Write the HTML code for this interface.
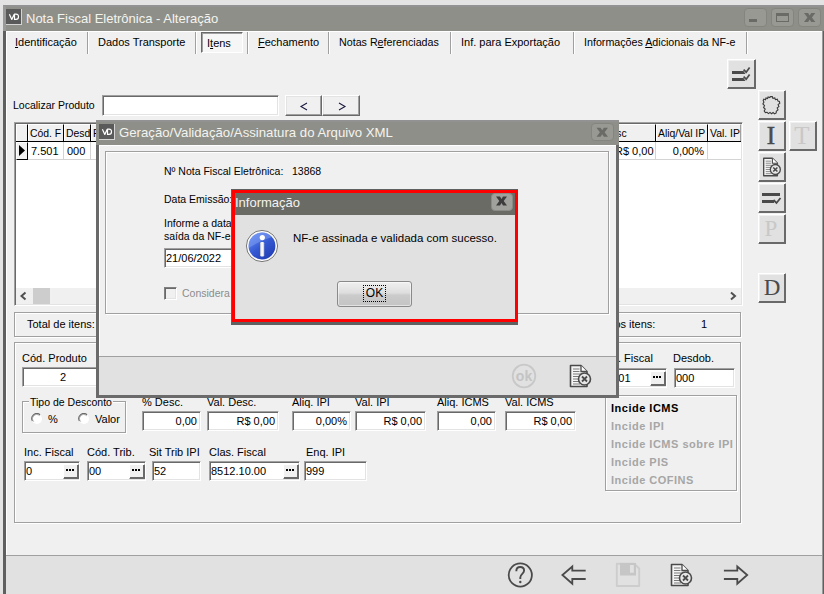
<!DOCTYPE html>
<html><head><meta charset="utf-8">
<style>
*{margin:0;padding:0;box-sizing:border-box}
html,body{width:824px;height:594px;overflow:hidden;background:#e3e3e3;font-family:"Liberation Sans",sans-serif;font-size:11px;color:#000}
.a{position:absolute}
.t{position:absolute;white-space:nowrap;line-height:13px}
.vd{position:absolute;width:16px;height:16px;background:#5a5a5a;border-right:1px solid #d4d4d4;border-bottom:1px solid #d4d4d4;color:#fff;font:bold 8px "Liberation Sans",sans-serif;line-height:15px;text-align:center;letter-spacing:-1px}
.ed{position:absolute;background:#fff;border:1px solid;border-color:#a0a0a0 #fff #fff #a0a0a0;box-shadow:inset 1px 1px 0 #696969,inset -1px -1px 0 #e3e3e3;overflow:hidden;white-space:nowrap;line-height:13px;padding:3px 3px 0 1px}
.ed.r{text-align:right}
.ed.c{text-align:center}
.btn{position:absolute;background:#f0f0f0;border:1px solid;border-color:#fff #696969 #696969 #fff;box-shadow:inset -1px -1px 0 #a0a0a0,inset 1px 1px 0 #e3e3e3}
.tb{position:absolute;background:#e1e1e1;border:1px solid;border-color:#fff #696969 #696969 #fff;box-shadow:inset -1px -1px 0 #696969,inset 1px 1px 0 #f0f0f0}
.etch{position:absolute;border:1px solid #a0a0a0;box-shadow:1px 1px 0 #fff,inset 1px 1px 0 #fff}
.tbtn{position:absolute;border-radius:4px;background:#999994;border:1px solid #85857f}
.sep{position:absolute;width:2px;top:32px;height:22px;border-left:1px solid #a0a0a0;border-right:1px solid #fff}
.ell{position:absolute;width:16px;height:15px;background:#f0f0f0;border:1px solid;border-color:#fff #696969 #696969 #fff;box-shadow:inset -1px -1px 0 #696969}
.ell:after{content:"";position:absolute;left:2px;top:4px;width:2px;height:2px;background:#000;box-shadow:3px 0 0 #000,6px 0 0 #000}
.hd{position:absolute;top:124px;height:17px;font-size:10.4px;background:#f0f0f0;border-top:1px solid #fff;border-left:1px solid #fff;border-right:1px solid #000;overflow:hidden;white-space:nowrap;line-height:13px;padding:2px 0 0 1px}
.cell{position:absolute;top:142px;height:18px;border-right:1px solid #d4d4d4;border-bottom:1px solid #d4d4d4;overflow:hidden;white-space:nowrap;line-height:13px;padding:3px 3px 0 3px;background:#fff}
.inc{position:absolute;left:611px;font:bold 11px "Liberation Sans",sans-serif;letter-spacing:0.5px;line-height:14px;color:#a6a6a6;white-space:nowrap}
</style></head><body>
<!-- ============ MAIN WINDOW ============ -->
<div class="a" style="left:3px;top:5px;width:821px;height:589px;background:#5f5f5f"></div>
<div class="a" style="left:3px;top:5px;width:821px;height:26px;background:#8f8f89;border-top:2px solid #929292;border-left:3px solid #999"></div>
<div class="vd" style="left:6px;top:9px"><svg width="15" height="15" style="position:absolute;left:0;top:0"><path d="M3.4 5.2 L5.8 10.4 L8.2 5.2 M8.5 5.2 V10.4 H10 C11.9 10.4 12.5 9.2 12.5 7.8 C12.5 6.4 11.9 5.2 10 5.2 Z" fill="none" stroke="#fff" stroke-width="1.2" stroke-linejoin="round"/></svg></div>
<div class="t" style="left:26px;top:11px;font-size:13px;line-height:15px;color:#f4f4ee">Nota Fiscal Eletrônica - Alteração</div>
<div class="tbtn" style="left:744px;top:8px;width:23px;height:19px"></div>
<div class="a" style="left:749px;top:19px;width:8px;height:3px;background:#6a6a66"></div>
<div class="tbtn" style="left:771px;top:8px;width:23px;height:19px"></div>
<div class="a" style="left:776px;top:13px;width:13px;height:9px;border:1px solid #6a6a66;border-top:3px solid #6a6a66"></div>
<div class="tbtn" style="left:798px;top:8px;width:23px;height:19px"></div>
<svg class="a" style="left:798px;top:8px" width="23" height="19"><path d="M6.0 5.0 L10.1 5.0 L11.7 7.5 L13.2 5.0 L17.3 5.0 L13.9 9.5 L17.3 14.0 L13.2 14.0 L11.7 11.5 L10.1 14.0 L6.0 14.0 L9.4 9.5 Z" fill="#6a6a66"/></svg>

<!-- client -->
<div class="a" style="left:6px;top:31px;width:816px;height:563px;background:#f0f0f0;border-top:1px solid #fff;border-left:1px solid #fff"></div>
<div class="a" style="left:6px;top:555px;width:816px;height:39px;background:#e1e1e1;border-top:1px solid #a0a0a0"></div>
<div class="a" style="left:822px;top:31px;width:1px;height:563px;background:#9a9a9a"></div>

<!-- tabs -->
<div class="t" style="left:15px;top:36px"><u>I</u>dentificação</div>
<div class="sep" style="left:87px"></div>
<div class="t" style="left:98px;top:36px">Dados Transporte</div>
<div class="sep" style="left:195px"></div>
<div class="a" style="left:201px;top:32px;width:42px;height:21px;border:1px solid;border-color:#696969 #fff #fff #696969;box-shadow:inset 1px 1px 0 #a0a0a0;background:#f6f6f6"></div>
<div class="t" style="left:207px;top:37px"><span>I</span><u>t</u>ens</div>
<div class="sep" style="left:247px"></div>
<div class="t" style="left:258px;top:36px"><u>F</u>echamento</div>
<div class="sep" style="left:328px"></div>
<div class="t" style="left:339px;top:36px;font-size:10.7px">Notas R<u>e</u>ferenciadas</div>
<div class="sep" style="left:450px"></div>
<div class="t" style="left:461px;top:36px">Inf. para Exportação</div>
<div class="sep" style="left:573px"></div>
<div class="t" style="left:584px;top:36px;font-size:10.7px">Informações <u>A</u>dicionais da NF-e</div>
<div class="sep" style="left:746px"></div>

<!-- right toolbar -->
<div class="tb" style="left:727px;top:59px;width:29px;height:30px"></div>
<svg class="a" style="left:727px;top:59px" width="29" height="30"><g fill="#4a4a4a"><path d="M5 12h11.5l2 3H5z"/><path d="M5 19h11.5l2 3H5z"/></g><g fill="none" stroke="#4a4a4a" stroke-width="1.7"><path d="M16.6 10.6l2.6 2.6 3.4-4.6"/><path d="M16.6 17.6l2.6 2.6 3.4-4.6"/></g></svg>
<div class="tb" style="left:758px;top:90px;width:28px;height:30px"></div>
<svg class="a" style="left:758px;top:90px" width="28" height="30"><path d="M12.6 6.6 L14.3 6.5 L14.9 8.3 L16.8 7.9 L17.4 9.7 L19.3 9.2 L20.0 11.1 L21.4 11.4 L21.8 13.3 L20.1 14.6 L20.9 16.6 L19.2 17.9 L20.0 19.9 L18.3 21.2 L18.2 23.0 L16.6 23.8 L15.1 22.5 L13.5 23.7 L12.0 22.4 L10.5 23.6 L9.0 22.3 L7.4 22.6 L6.2 21.0 L7.2 19.0 L5.6 17.5 L6.5 15.6 L4.9 14.0 L5.9 12.1 L5.2 10.4 L5.8 9.1 L7.5 9.7 L8.0 8.0 L9.6 8.6 L10.1 6.9 L11.7 7.5 Z" fill="none" stroke="#3a3a3a" stroke-width="1.1" stroke-linejoin="miter" stroke-miterlimit="10"/></svg>
<div class="tb" style="left:758px;top:121px;width:28px;height:30px"></div>
<div class="t" style="left:757px;top:122px;width:28px;text-align:center;font:25px/28px 'Liberation Serif',serif;color:#4a4a4a;-webkit-text-stroke:0.5px #4a4a4a">I</div>
<div class="tb" style="left:789px;top:121px;width:28px;height:30px"></div>
<div class="t" style="left:788px;top:122px;width:28px;text-align:center;font:25px/28px 'Liberation Serif',serif;color:#c8c8c8">T</div>
<div class="tb" style="left:758px;top:152px;width:28px;height:30px"></div>
<svg class="a" style="left:762px;top:157px" width="20" height="20" viewBox="0 0 23 24"><use href="#docx"/></svg>
<div class="tb" style="left:758px;top:183px;width:28px;height:30px"></div>
<svg class="a" style="left:758px;top:183px" width="28" height="30"><g fill="#4a4a4a"><rect x="4" y="10" width="18" height="3"/><rect x="4" y="17" width="12" height="3"/></g><path d="M15.5 17l3 3 4-5" fill="none" stroke="#4a4a4a" stroke-width="1.8"/></svg>
<div class="tb" style="left:758px;top:214px;width:28px;height:30px"></div>
<div class="t" style="left:757px;top:215px;width:28px;text-align:center;font:23px/28px 'Liberation Serif',serif;color:#c8c8c8">P</div>
<div class="tb" style="left:758px;top:273px;width:28px;height:30px"></div>
<div class="t" style="left:758px;top:274px;width:28px;text-align:center;font:23px/28px 'Liberation Serif',serif;color:#4a4a4a">D</div>

<!-- localizar -->
<div class="t" style="left:13px;top:99px;font-size:10.5px">Localizar Produto</div>
<div class="ed" style="left:102px;top:95px;width:177px;height:21px"></div>
<div class="btn" style="left:285px;top:95px;width:37px;height:21px"></div>
<div class="btn" style="left:322px;top:95px;width:38px;height:21px"></div>
<svg class="a" style="left:285px;top:95px" width="75" height="21"><path d="M22 8 L16 11.5 L22 15 M54 8 L60 11.5 L54 15" fill="none" stroke="#1a1a40" stroke-width="1.1"/></svg>


<!-- grid -->
<div class="a" style="left:14px;top:122px;width:729px;height:184px;background:#fff;border:1px solid;border-color:#a0a0a0 #fff #fff #a0a0a0;box-shadow:inset 1px 1px 0 #696969,inset -1px -1px 0 #e3e3e3"></div>
<div class="hd" style="left:16px;width:12px"></div>
<div class="hd" style="left:28px;width:36px">Cód. F</div>
<div class="hd" style="left:64px;width:27px">Desd</div>
<div class="hd" style="left:91px;width:40px">P</div>
<div class="hd" style="left:612px;width:44px;padding-left:2px;text-indent:-12px">Desc</div>
<div class="hd" style="left:656px;width:52px">Aliq/Val IP</div>
<div class="hd" style="left:708px;width:33px;border-right:1px solid #a0a0a0">Val. IP</div>
<div class="a" style="left:16px;top:141px;width:725px;height:1px;background:#000"></div>
<div class="a" style="left:16px;top:142px;width:12px;height:18px;background:#f0f0f0;border-top:1px solid #fff;border-left:1px solid #fff;border-right:1px solid #000;border-bottom:1px solid #000"></div>
<svg class="a" style="left:18px;top:145px" width="8" height="12"><path d="M1 0 L7 5.5 L1 11 Z" fill="#000"/></svg>
<div class="cell" style="left:28px;width:36px">7.501</div>
<div class="cell" style="left:64px;width:27px">000</div>
<div class="cell" style="left:91px;width:40px"></div>
<div class="cell" style="left:612px;width:44px;text-align:right;padding-right:7px">R$ 0,00</div>
<div class="cell" style="left:656px;width:52px;text-align:right">0,00%</div>
<div class="cell" style="left:708px;width:33px;border-right:none"></div>
<!-- scrollbar -->
<div class="a" style="left:16px;top:288px;width:725px;height:16px;background:#f0f0f0"></div>
<svg class="a" style="left:19px;top:291px" width="10" height="10"><path d="M6.5 1.5 L2.5 5 L6.5 8.5" fill="none" stroke="#505050" stroke-width="2"/></svg>
<div class="a" style="left:33px;top:288px;width:17px;height:16px;background:#cdcdcd"></div>
<svg class="a" style="left:728px;top:291px" width="10" height="10"><path d="M3 1.5 L7 5 L3 8.5" fill="none" stroke="#505050" stroke-width="2"/></svg>

<!-- totals -->
<div class="etch" style="left:14px;top:312px;width:727px;height:25px"></div>
<div class="t" style="left:27px;top:318px">Total de itens:</div>
<div class="t" style="left:582px;top:318px">Total dos itens:</div>
<div class="t" style="left:701px;top:318px">1</div>

<!-- main panel -->
<div class="etch" style="left:14px;top:342px;width:727px;height:181px"></div>
<div class="t" style="left:22px;top:352px">Cód. Produto</div>
<div class="ed c" style="left:22px;top:367px;width:84px;height:20px">2</div>
<div class="t" style="left:596px;top:352px">Clas. Fiscal</div>
<div class="ed" style="left:595px;top:368px;width:72px;height:20px;padding-left:7px">5.101</div>
<div class="ell" style="left:650px;top:371px"></div>
<div class="t" style="left:673px;top:352px">Desdob.</div>
<div class="ed" style="left:674px;top:368px;width:61px;height:20px">000</div>

<div class="etch" style="left:22px;top:401px;width:104px;height:32px;box-shadow:1px 1px 0 #fff,inset 1px 1px 0 #fff"></div>
<div class="t" style="left:29px;top:396px;background:#f0f0f0;padding:0 1px;font-size:10.5px">Tipo de Desconto</div>
<svg class="a" style="left:31px;top:413px" width="12" height="12"><circle cx="6" cy="6" r="5" fill="#fff"/><path d="M1.5 8 A5 5 0 0 1 9 1.7" fill="none" stroke="#6a6a6a" stroke-width="1.3"/><path d="M2.7 8.6 A4 4 0 0 1 8.6 2.7" fill="none" stroke="#a8a8a8" stroke-width="1"/></svg>
<div class="t" style="left:48px;top:413px">%</div>
<svg class="a" style="left:78px;top:413px" width="12" height="12"><circle cx="6" cy="6" r="5" fill="#fff"/><path d="M1.5 8 A5 5 0 0 1 9 1.7" fill="none" stroke="#6a6a6a" stroke-width="1.3"/><path d="M2.7 8.6 A4 4 0 0 1 8.6 2.7" fill="none" stroke="#a8a8a8" stroke-width="1"/></svg>
<div class="t" style="left:95px;top:413px">Valor</div>

<div class="t" style="left:142px;top:396px">% Desc.</div>
<div class="ed r" style="left:142px;top:411px;width:59px;height:20px">0,00</div>
<div class="t" style="left:207px;top:396px">Val. Desc.</div>
<div class="ed r" style="left:207px;top:411px;width:72px;height:20px">R$ 0,00</div>
<div class="t" style="left:292px;top:396px">Aliq. IPI</div>
<div class="ed r" style="left:292px;top:411px;width:59px;height:20px">0,00%</div>
<div class="t" style="left:355px;top:396px">Val. IPI</div>
<div class="ed r" style="left:355px;top:411px;width:71px;height:20px">R$ 0,00</div>
<div class="t" style="left:437px;top:396px">Aliq. ICMS</div>
<div class="ed r" style="left:437px;top:411px;width:59px;height:20px">0,00</div>
<div class="t" style="left:505px;top:396px">Val. ICMS</div>
<div class="ed r" style="left:505px;top:411px;width:71px;height:20px">R$ 0,00</div>

<div class="t" style="left:24px;top:446px">Inc. Fiscal</div>
<div class="ed" style="left:24px;top:461px;width:56px;height:20px">0</div>
<div class="ell" style="left:63px;top:464px"></div>
<div class="t" style="left:87px;top:446px">Cód. Trib.</div>
<div class="ed" style="left:87px;top:461px;width:59px;height:20px">00</div>
<div class="ell" style="left:129px;top:464px"></div>
<div class="t" style="left:149px;top:446px">Sit Trib IPI</div>
<div class="ed" style="left:152px;top:461px;width:49px;height:20px">52</div>
<div class="t" style="left:209px;top:446px">Clas. Fiscal</div>
<div class="ed" style="left:209px;top:461px;width:91px;height:20px">8512.10.00</div>
<div class="ell" style="left:283px;top:464px"></div>
<div class="t" style="left:306px;top:446px">Enq. IPI</div>
<div class="ed" style="left:304px;top:461px;width:63px;height:20px">999</div>

<div class="etch" style="left:605px;top:395px;width:132px;height:96px"></div>
<div class="inc" style="top:401px;color:#000">Incide ICMS</div>
<div class="inc" style="top:419px">Incide IPI</div>
<div class="inc" style="top:437px">Incide ICMS sobre IPI</div>
<div class="inc" style="top:455px">Incide PIS</div>
<div class="inc" style="top:473px">Incide COFINS</div>

<!-- bottom toolbar -->
<svg class="a" style="left:500px;top:556px" width="260" height="38">
 <circle cx="20.3" cy="19" r="11.6" fill="none" stroke="#4a4a4a" stroke-width="1.8"/>
 <path d="M16.3 15.2 C16.3 12.3 18.2 11 20.2 11 C22.4 11 24.1 12.5 24.1 14.6 C24.1 17.8 20.3 18 20.3 21.5 L20.3 23" fill="none" stroke="#4a4a4a" stroke-width="1.9"/>
 <circle cx="20.3" cy="26" r="1.2" fill="#4a4a4a"/>
 <path d="M85.7 14.6 H72.3 V10.5 L62.4 19 L72.3 27.7 V23 H85.7" fill="none" stroke="#4a4a4a" stroke-width="1.8" stroke-linejoin="miter"/>
 <path d="M116.8 7.8 H134.5 L139.2 12.5 V30 H116.8 Z" fill="none" stroke="#cdcdcd" stroke-width="1.9" stroke-linejoin="round"/>
 <rect x="120" y="7" width="16" height="12.5" fill="#c6c6c6"/>
 <rect x="130" y="9" width="3.8" height="7.7" fill="#e1e1e1"/>
 <path d="M223.9 14.6 H237.3 V10.5 L247.2 19 L237.3 27.7 V23 H223.9" fill="none" stroke="#4a4a4a" stroke-width="1.8" stroke-linejoin="miter"/>
</svg>
<svg class="a" style="left:670px;top:562px" width="23" height="26" viewBox="0 0 23 24"><use href="#docx"/></svg>

<!-- ============ GERACAO DIALOG ============ -->
<div class="a" style="left:96px;top:120px;width:523px;height:278px;background:#6a6a6a"></div>
<div class="a" style="left:96px;top:120px;width:523px;height:25px;background:#8f8f89;border-top:2px solid #929292"></div>
<div class="vd" style="left:99px;top:124px"><svg width="15" height="15" style="position:absolute;left:0;top:0"><path d="M3.4 5.2 L5.8 10.4 L8.2 5.2 M8.5 5.2 V10.4 H10 C11.9 10.4 12.5 9.2 12.5 7.8 C12.5 6.4 11.9 5.2 10 5.2 Z" fill="none" stroke="#fff" stroke-width="1.2" stroke-linejoin="round"/></svg></div>
<div class="t" style="left:119px;top:125px;font-size:13.2px;line-height:15px;color:#f4f4ee">Geração/Validação/Assinatura do Arquivo XML</div>
<div class="tbtn" style="left:591px;top:123px;width:23px;height:18px"></div>
<svg class="a" style="left:591px;top:123px" width="23" height="18"><path d="M5.5 4.7 L9.6 4.7 L11.2 7.2 L12.9 4.7 L17.0 4.7 L13.6 9.2 L17.0 13.7 L12.9 13.7 L11.2 11.2 L9.6 13.7 L5.5 13.7 L8.9 9.2 Z" fill="#6a6a66"/></svg>
<div class="a" style="left:99px;top:145px;width:517px;height:250px;background:#f0f0f0;border-left:1px solid #fff;border-top:1px solid #fff"></div>
<div class="etch" style="left:105px;top:151px;width:504px;height:163px"></div>
<div class="t" style="left:164px;top:165px;font-size:10.5px">Nº Nota Fiscal Eletrônica:</div>
<div class="t" style="left:292px;top:165px;font-size:10.5px">13868</div>
<div class="t" style="left:164px;top:193px;font-size:10.5px">Data Emissão:</div>
<div class="t" style="left:164px;top:217px;font-size:10.5px">Informe a data de</div>
<div class="t" style="left:164px;top:230px;font-size:10.5px">saída da NF-e:</div>
<div class="ed" style="left:164px;top:248px;width:90px;height:20px">21/06/2022</div>
<div class="a" style="left:164px;top:287px;width:13px;height:13px;border:1px solid;border-color:#808080 #fff #fff #808080;box-shadow:inset 1px 1px 0 #696969,inset -1px -1px 0 #e3e3e3;background:#f0f0f0"></div>
<div class="t" style="left:182px;top:287px;font-size:10.5px;color:#8c8c8c">Considera</div>
<div class="a" style="left:99px;top:356px;width:517px;height:39px;background:#e1e1e1;border-top:1px solid #a0a0a0"></div>
<svg class="a" style="left:500px;top:356px" width="100" height="38">
 <circle cx="24" cy="20" r="11.3" fill="none" stroke="#c8c8c8" stroke-width="1.8"/>
 <text x="24" y="25" text-anchor="middle" font-family="Liberation Sans" font-weight="bold" font-size="14" fill="#c4c4c4">ok</text>
</svg>
<svg class="a" style="left:569px;top:363px" width="23" height="26" viewBox="0 0 23 24"><use href="#docx"/></svg>

<!-- ============ INFO DIALOG ============ -->
<div class="a" style="left:231px;top:189px;width:287px;height:136px;background:#5f6060"></div>
<div class="a" style="left:232px;top:190px;width:286px;height:132px;border:3px solid #ff0000;background:#e1e1e1"></div>
<div class="a" style="left:235px;top:193px;width:280px;height:22px;background:#6b6b66"></div>
<div class="t" style="left:235px;top:195px;font-size:13px;line-height:15px;color:#f4f4ee">Informação</div>
<div class="tbtn" style="left:491px;top:193px;width:22px;height:18px;background:#a0a09c;border-color:#8a8a86"></div>
<svg class="a" style="left:491px;top:193px" width="22" height="18"><path d="M5.0 3.6 L9.0 3.6 L10.5 6.1 L12.0 3.6 L16.0 3.6 L12.7 8.1 L16.0 12.6 L12.0 12.6 L10.5 10.1 L9.0 12.6 L5.0 12.6 L8.3 8.1 Z" fill="#3c3c3c"/></svg>
<svg class="a" style="left:245px;top:229px" width="34" height="34">
 <defs><linearGradient id="ig" x1="0.2" y1="0.1" x2="0.8" y2="0.9"><stop offset="0" stop-color="#5f86ee"/><stop offset="0.5" stop-color="#3458d2"/><stop offset="1" stop-color="#2340b8"/></linearGradient>
 <linearGradient id="ist" x1="0" y1="0" x2="1" y2="0"><stop offset="0" stop-color="#d8d8d0"/><stop offset="0.5" stop-color="#fff"/><stop offset="1" stop-color="#c8c8c0"/></linearGradient></defs>
 <circle cx="17" cy="17" r="15.6" fill="#fafafa" stroke="#7a7a7a" stroke-width="1"/>
 <circle cx="17" cy="17" r="13.4" fill="url(#ig)"/>
 <path d="M3.8 19 A13.4 13.4 0 0 1 27 8 Q16 11 3.8 19Z" fill="#7d9cf2" opacity="0.55"/>
 <circle cx="17.3" cy="8.6" r="2.6" fill="#fff"/>
 <rect x="15.2" y="13" width="4" height="14.5" rx="1.2" fill="url(#ist)"/>
</svg>
<div class="t" style="left:293px;top:232px;font-size:11.5px">NF-e assinada e validada com sucesso.</div>
<div class="a" style="left:337px;top:281px;width:75px;height:26px;border:1px solid #8a8a8a;border-radius:3px;background:linear-gradient(#f0f0f0,#dedede 45%,#cbcbcb 55%,#c4c4c4);box-shadow:inset 0 0 0 1px rgba(255,255,255,0.5)"></div>
<div class="a" style="left:363px;top:285px;width:23px;height:17px;border:1px dotted #000"></div>
<div class="t" style="left:337px;top:287px;width:75px;text-align:center;font-size:12px">OK</div>

<svg width="0" height="0" style="position:absolute">
 <defs>
  <g id="docx">
   <path d="M1.5 1.5 H12 L18 7.5 V22.5 H1.5 Z" fill="#f4f4f4" stroke="#4a4a4a" stroke-width="1.6" stroke-linejoin="round"/>
   <path d="M12 1.5 V7.5 H18" fill="#fff" stroke="#4a4a4a" stroke-width="1.3"/>
   <g stroke="#7a7a7a" stroke-width="1"><path d="M4 5 H10.5"/><path d="M4 7.5 H10.5"/><path d="M4 10 H12"/><path d="M4 12.5 H11"/><path d="M4 15 H10"/><path d="M4 17.5 H10"/><path d="M4 20 H11"/></g>
   <circle cx="15.5" cy="15" r="6" fill="#e6e6e6" stroke="#4a4a4a" stroke-width="1.6"/>
   <path d="M13 12.5 L18 17.5 M18 12.5 L13 17.5" stroke="#4a4a4a" stroke-width="1.8"/>
  </g>
 </defs>
</svg>
</body></html>
